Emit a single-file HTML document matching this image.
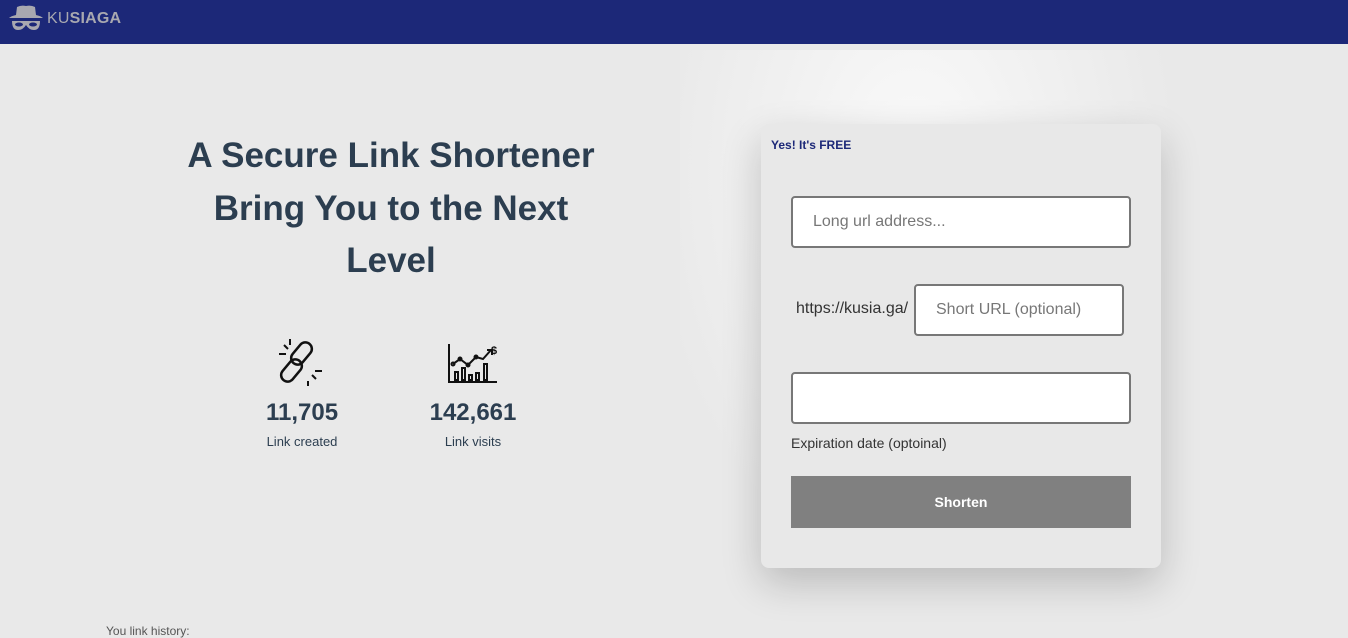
<!DOCTYPE html>
<html><head><style>
*{margin:0;padding:0;box-sizing:border-box}
body{width:1348px;height:637px;overflow:hidden;background:#e9e9e9;font-family:"Liberation Sans",Arial,sans-serif;position:relative}
.hdr{position:absolute;left:0;top:0;width:1348px;height:44px;background:#1c2878;z-index:5}
.logo{position:absolute;left:47px;top:10px;color:#a8a8b0;font-size:16px;letter-spacing:0.2px}
.logo b{font-weight:bold}
h1{position:absolute;left:181px;width:420px;top:130px;text-align:center;font-size:35px;line-height:52.5px;color:#2c3e50;font-weight:bold}
.stat{position:absolute;text-align:center;color:#2c3e50}
.stat .n{font-size:24px;font-weight:bold}
.stat .l{font-size:13px;margin-top:7px}
.glow{position:absolute;left:680px;top:50px;width:520px;height:560px;background:radial-gradient(ellipse at 45% 22%,rgba(250,250,250,1) 0%,rgba(244,244,244,0.8) 30%,rgba(233,233,233,0) 65%)}
.card{position:absolute;left:761px;top:124px;width:400px;height:444px;background:#e8e8e8;border-radius:8px;box-shadow:0 15px 40px rgba(0,0,0,0.2)}
.free{position:absolute;left:10px;top:14px;font-size:12px;font-weight:bold;color:#1c2878}
.inp{position:absolute;background:#fff;border:2px solid #777;border-radius:4px;font-size:16px;color:#777;padding-left:20px;display:flex;align-items:center}
.btn{position:absolute;left:30px;top:352px;width:340px;height:52px;background:#808080;color:#fff;font-weight:bold;font-size:14px;display:flex;align-items:center;justify-content:center}
</style></head><body>
<div class="hdr">
<svg style="position:absolute;left:8px;top:4px" width="36" height="28" viewBox="0 0 36 28"><path d="M9 3 Q13 1 18 2 Q23 1 27 3 L28 11 Q33 12 35 14 L1 14 Q3 12 8 11 Z" fill="#a8a8b0"/><path d="M4 17 L32 17 Q32 26 26 26 Q21 26 18 21 Q15 26 10 26 Q4 26 4 17Z" fill="#a8a8b0"/><ellipse cx="11" cy="20.5" rx="4" ry="2" fill="#1c2878"/><ellipse cx="25" cy="20.5" rx="4" ry="2" fill="#1c2878"/></svg>
<div class="logo">KU<b>SIAGA</b></div>
</div>
<h1>A Secure Link Shortener Bring You to the Next Level</h1>
<svg style="position:absolute;left:276px;top:337px" width="52" height="52" viewBox="0 0 52 52" fill="none" stroke="#111" stroke-width="2.5"><rect x="19" y="4" width="13" height="25" rx="6.5" transform="rotate(40 25.5 16.5)"/><rect x="9" y="21" width="13" height="25" rx="6.5" transform="rotate(40 15.5 33.5)"/><path d="M3 17h7M8 8l4 4M14 2v6M40 42l-4-4M46 34h-7M32 49v-5" stroke-width="2"/></svg>
<svg style="position:absolute;left:447px;top:342px" width="52" height="42" viewBox="0 0 52 42" fill="none" stroke="#111" stroke-width="2"><path d="M2 2v38h48"/><path d="M6 22l7-5 8 6 8-8 7 2 8-9"/><path d="M40 8h5v5"/><circle cx="6" cy="22" r="1.5"/><circle cx="13" cy="17" r="1.5"/><circle cx="21" cy="23" r="1.5"/><circle cx="29" cy="15" r="1.5"/><rect x="8" y="30" width="3" height="8"/><rect x="15" y="26" width="3" height="12"/><rect x="22" y="33" width="3" height="5"/><rect x="29" y="31" width="3" height="7"/><rect x="37" y="22" width="3" height="16"/><text x="44" y="12" font-size="11" font-weight="bold" fill="#111" stroke="none" font-family="Liberation Sans">$</text></svg>
<div class="stat" style="left:252px;width:100px;top:399px"><div class="n">11,705</div><div class="l">Link created</div></div>
<div class="stat" style="left:413px;width:120px;top:399px"><div class="n">142,661</div><div class="l">Link visits</div></div>
<div style="position:absolute;left:106px;top:624px;font-size:12px;color:#555">You link history:</div>
<div class="glow"></div>
<div class="card">
<div class="free">Yes! It's FREE</div>
<div class="inp" style="left:30px;top:72px;width:340px;height:52px">Long url address...</div>
<div style="position:absolute;left:35px;top:176px;font-size:16px;color:#333">https://kusia.ga/</div>
<div class="inp" style="left:153px;top:160px;width:210px;height:52px">Short URL (optional)</div>
<div class="inp" style="left:30px;top:248px;width:340px;height:52px"></div>
<div style="position:absolute;left:30px;top:311px;font-size:14px;color:#333">Expiration date (optoinal)</div>
<div class="btn">Shorten</div>
</div>
</body></html>
